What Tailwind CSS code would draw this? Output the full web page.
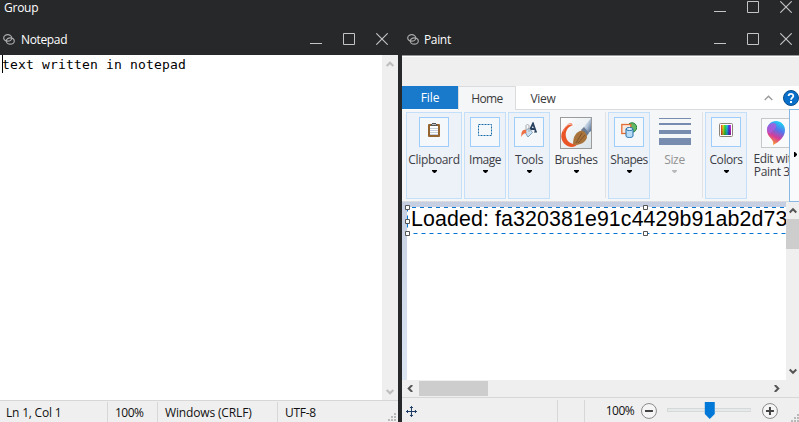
<!DOCTYPE html>
<html lang="en">
<head>
<meta charset="utf-8">
<title>Group</title>
<script src="https://cdn.jsdelivr.net/npm/@tailwindcss/browser@4"></script>
</head>
<body class="w-[799px] h-[422px] overflow-hidden bg-[#27282a] font-['Open_Sans','Noto_Sans',sans-serif] text-[12px] leading-4 text-[#111]">
<svg class="hidden">
  <symbol id="win" viewBox="0 0 78 12"><g fill="none" stroke="#c4c4c4"><path d="M0 10.5h12M33.5.5h11v11h-11z"/><path d="M66.300.3l11.400 11.400M77.700.3l-11.400 11.400" stroke-width="1.100"/></g></symbol>
  <symbol id="link" viewBox="0 0 12 11"><g fill="none" stroke="#aaa" stroke-width="1.200"><ellipse cx="4.700" cy="3.900" rx="4" ry="3.200"/><ellipse cx="7.300" cy="7" rx="4" ry="3.200"/></g></symbol>
  <symbol id="drop" viewBox="0 0 5 3"><path d="M0 0h5v1L3 3H2L0 1z"/></symbol>
  <symbol id="grip" viewBox="0 0 8 8"><path fill="#b9b9b9" d="M6 0h2v2H6zM3 3h2v2H3zM6 3h2v2H6zM0 6h2v2H0zM3 6h2v2H3zM6 6h2v2H6z"/></symbol>
</svg>

<header class="flex h-[23px] items-start justify-between pl-1 pr-[7px] text-white">
  <span class="tracking-[-0.25px]">Group</span>
  <svg class="mt-px h-3 w-[78px]"><use href="#win"/></svg>
</header>

<div class="grid h-[399px] grid-cols-[398px_397px] gap-1">
  <section class="flex min-w-0 flex-col">
    <div class="flex h-8 items-center pl-[3px] pr-[10px] text-white">
      <svg class="mr-[6px] h-[11px] w-3"><use href="#link"/></svg>
      <span class="mt-[2px] grow tracking-[-0.35px]">Notepad</span>
      <svg class="h-3 w-[78px]"><use href="#win"/></svg>
    </div>
    <div class="flex h-[345px] bg-white">
      <div class="flex grow items-start pl-[2px]">
        <div class="h-[18px] border-l border-black font-['DejaVu_Sans_Mono',monospace] text-[13px] leading-[19px] tracking-[0.170px] text-black"><span class="-ml-px">text written in notepad</span></div>
      </div>
      <div class="flex w-4 flex-col items-center justify-between bg-[#efefef] pb-[5px] pt-[6px]">
        <svg class="h-[7px] w-2" viewBox="0 0 8 7"><path d="M.7 5L4 1.700 7.300 5" fill="none" stroke="#bdbdbd" stroke-width="2"/></svg>
        <svg class="h-[7px] w-2" viewBox="0 0 8 7"><path d="M.7 2L4 5.300 7.300 2" fill="none" stroke="#bdbdbd" stroke-width="2"/></svg>
      </div>
    </div>
    <footer class="flex h-[22px] border-t border-[#d7d7d7] bg-[#efefef] pt-px text-[12px] leading-[22px]">
      <div class="w-[108px] border-r border-[#d7d7d7] pl-[6px] tracking-[-0.2px]">Ln 1, Col 1</div>
      <div class="w-[50px] border-r border-[#d7d7d7] pl-[7px] tracking-[-0.5px]">100%</div>
      <div class="w-[120px] border-r border-[#d7d7d7] pl-[7px] tracking-[-0.15px]">Windows (CRLF)</div>
      <div class="grow pl-[7px] tracking-[-0.3px]">UTF-8</div>
      <svg class="mr-[2px] mt-[11px] h-2 w-2"><use href="#grip"/></svg>
    </footer>
  </section>

  <section class="flex min-w-0 flex-col">
    <div class="flex h-8 items-center pl-[5px] pr-[7px] text-white">
      <svg class="mr-[5px] h-[11px] w-3"><use href="#link"/></svg>
      <span class="mt-[2px] grow tracking-[-0.35px]">Paint</span>
      <svg class="h-3 w-[78px]"><use href="#win"/></svg>
    </div>
    <div class="h-[31px] border-t border-[#999] bg-[#efefef]"><div class="h-px bg-white"></div></div>
    <nav class="flex h-6 bg-white text-center leading-6 text-[#3a3a3a]">
      <div class="h-[23px] w-14 bg-[#1979ca] tracking-[-0.1px] text-white">File</div>
      <div class="h-6 w-[58px] border-x border-t border-[#dadbdc] bg-[#f5f6f7] leading-[23px] tracking-[-0.6px]">Home</div>
      <div class="w-[54px] border-b border-[#dadbdc] leading-[25px] tracking-[-0.3px]">View</div>
      <div class="flex grow items-center justify-end gap-[10px] border-b border-[#dadbdc]">
        <svg class="h-[6px] w-[9px]" viewBox="0 0 9 6"><path d="M.7 5l3.800-3.800L8.300 5" fill="none" stroke="#999" stroke-width="1.300"/></svg>
        <svg class="h-4 w-4" viewBox="0 0 16 16"><circle cx="8" cy="8" r="7.500" fill="#0870cb" stroke="#0b4d8b"/><path d="M5.600 6C5.700 3.200 10.300 3.100 10.300 6c0 1.700-2.200 1.700-2.200 3.700" fill="none" stroke="white" stroke-width="1.800"/><path fill="white" d="M7 11h2v2H7z"/></svg>
      </div>
    </nav>
    <div class="flex h-[92px] border-b border-[#dadbdc] bg-[#f5f6f7] text-center text-[#3c3c46]">
      <div class="flex w-[387px] overflow-hidden pl-1 pt-[2px] tracking-[-0.35px]">
        <div class="mr-[2px] flex h-[87px] w-14 shrink-0 flex-col items-center border border-[#c3dffa] bg-[#ecf2f7] pt-1">
          <div class="grid h-[30px] w-[30px] shrink-0 place-items-center border border-[#9fcdf9] bg-[#f4f8fb]"><svg class="-mt-[5px] h-[14px] w-3" viewBox="0 0 12 14"><rect y="1" width="12" height="13" rx="1" fill="#95642f"/><path fill="#fff" d="M2 3h8v9H2z"/><path d="M2 5.500h8M2 7.500h8M2 9.500h8M2 11.500h8" stroke="#c4ced8"/><path fill="#555" d="M4 0h4v1h1v2H3V1h1z"/><path fill="#bbb" d="M4 1h4v1H4z"/></svg></div>
          <span class="mt-[5px]">Clipboard</span><svg class="mt-[2px] h-[3px] w-[5px]"><use href="#drop"/></svg>
        </div>
        <div class="mr-[2px] flex h-[87px] w-[42px] shrink-0 flex-col items-center border border-[#c3dffa] bg-[#ecf2f7] pt-1">
          <div class="grid h-[30px] w-[30px] shrink-0 place-items-center border border-[#9fcdf9] bg-[#f4f8fb]"><svg class="-mt-[5px] h-3 w-[14px]" viewBox="0 0 14 12"><rect x=".5" y=".5" width="13" height="11" fill="none" stroke="#176ba9" stroke-dasharray="2 1"/></svg></div>
          <span class="mt-[5px] tracking-[-0.5px]">Image</span><svg class="mt-[2px] h-[3px] w-[5px]"><use href="#drop"/></svg>
        </div>
        <div class="flex h-[87px] w-[42px] shrink-0 flex-col items-center border border-[#c3dffa] bg-[#ecf2f7] pt-1">
          <div class="grid h-[30px] w-[30px] shrink-0 place-items-center border border-[#9fcdf9] bg-[#f4f8fb]"><svg class="-mt-[5px] h-4 w-4" viewBox="0 0 16 16"><path d="M8 10L12 1.500l3 8.500M9.500 7h4" fill="none" stroke="#29415f" stroke-width="1.800"/><path d="M7 10h3m3 0h3" stroke="#29415f"/><path d="M3.500 9.500L8 6l3.500 4.500L7 15z" fill="#c9e1f2" stroke="#819eb8"/><path d="M5 9V4c0-2 3-2 3 0v6" fill="none" stroke="#aaa"/><path d="M5 8C2 7-.5 10 .5 15c1-3 3-4 5-4z" fill="#ed7047"/></svg></div>
          <span class="mt-[5px]">Tools</span><svg class="mt-[2px] h-[3px] w-[5px]"><use href="#drop"/></svg>
        </div>
        <div class="flex h-[86px] w-[56px] shrink-0 flex-col items-center border-r border-[#e0e2e4] pt-[5px] pr-[3px]">
          <svg class="h-8 w-8 shrink-0" viewBox="0 0 32 32"><defs><linearGradient id="paper" x2="1" y2="1"><stop stop-color="#fff"/><stop offset="1" stop-color="#d9e3e8"/></linearGradient><linearGradient id="handle" x2="1" y2="1"><stop stop-color="#fff"/><stop offset=".5" stop-color="#b8c9dc"/><stop offset="1" stop-color="#405b82"/></linearGradient></defs><rect x=".5" y=".5" width="31" height="31" fill="url(#paper)" stroke="#9b9b9b"/><path d="M13 8C9 6 3 11 1.500 17 0 24 6 30 12 30c2 0 4-1 6-3-6 1-11-2-12-7C5 15 7 10 13 8z" fill="#ea5527"/><path d="M12 7C9 5 5 10 3 15" fill="none" stroke="#f38463"/><path d="M23 11l8-10v13l-4 3z" fill="url(#handle)"/><path d="M21 13l3-3 5 6-3 4z" fill="#6b7b91"/><path d="M13 27.500c0-8 3-13 9-14 3 1 5 4 5 7-2 6-8 8-14 7z" fill="#a8743c"/><path d="M16 26l6-10M18 26l7-8" stroke="#80522a"/></svg>
          <span class="mt-[3px]">Brushes</span><svg class="mt-[2px] h-[3px] w-[5px]"><use href="#drop"/></svg>
        </div>
        <div class="ml-[2px] flex h-[87px] w-[42px] shrink-0 flex-col items-center border border-[#c3dffa] bg-[#ecf2f7] pt-1">
          <div class="grid h-[30px] w-[30px] shrink-0 place-items-center border border-[#9fcdf9] bg-[#f4f8fb]"><svg class="-mt-[5px] h-4 w-4" viewBox="0 0 16 16"><circle cx="11" cy="5.500" r="4.700" fill="#64b765" stroke="#24843b"/><rect x=".8" y="2.500" width="9" height="9" fill="#fae8df" stroke="#e36c36" stroke-width="1.300"/><path d="M5 7v7c0 2 7 2 7 0V7" fill="#b8dcf5" stroke="#226fad"/><ellipse cx="8.500" cy="7" rx="3.500" ry="1.500" fill="#e5f4ff" stroke="#226fad"/></svg></div>
          <span class="mt-[5px] tracking-[-0.5px]">Shapes</span><svg class="mt-[2px] h-[3px] w-[5px]"><use href="#drop"/></svg>
        </div>
        <div class="flex h-[86px] w-[53px] shrink-0 flex-col items-center border-r border-[#e0e2e4] pr-[3px] pt-[6px] text-[#929292]">
          <svg class="h-[27px] w-8 shrink-0" viewBox="0 0 32 27"><path fill="#788caf" d="M0 0h32v1H0zM0 5h32v2H0zM0 12h32v4H0zM0 20h32v7H0z"/></svg>
          <span class="mt-[7px]">Size</span><svg class="mt-[2px] h-[3px] w-[5px] fill-[#b9b9b9]"><use href="#drop"/></svg>
        </div>
        <div class="ml-[2px] flex h-[87px] w-[42px] shrink-0 flex-col items-center border border-[#c3dffa] bg-[#ecf2f7] pt-1">
          <div class="grid h-[30px] w-[30px] shrink-0 place-items-center border border-[#9fcdf9] bg-[#f4f8fb]"><svg class="-mt-[5px] h-[14px] w-[14px]" viewBox="0 0 14 14"><defs><linearGradient id="rain"><stop stop-color="#f22a20"/><stop offset=".2" stop-color="#e9e329"/><stop offset=".4" stop-color="#24dc39"/><stop offset=".6" stop-color="#25c9ea"/><stop offset=".8" stop-color="#4433e2"/><stop offset="1" stop-color="#e629d5"/></linearGradient><linearGradient id="dark" x2="0" y2="1"><stop stop-opacity="0"/><stop offset="1" stop-opacity=".3"/></linearGradient></defs><rect x=".5" y=".5" width="13" height="13" rx="1" fill="#fff" stroke="#8b8378"/><path fill="url(#rain)" d="M2 2h10v10H2z"/><path fill="url(#dark)" d="M2 2h10v10H2z"/></svg></div>
          <span class="mt-[5px] tracking-[-0.450px]">Colors</span><svg class="mt-[2px] h-[3px] w-[5px]"><use href="#drop"/></svg>
        </div>
        <div class="ml-[5px] flex w-[48px] shrink-0 flex-col items-center pt-[6px]">
          <svg class="h-[30px] w-[30px] shrink-0" viewBox="0 0 30 30"><defs><linearGradient id="pin" x1=".7" x2=".3" y2="1"><stop stop-color="#17d9f5"/><stop offset=".35" stop-color="#5475ed"/><stop offset=".65" stop-color="#d63c9a"/><stop offset="1" stop-color="#ffa51c"/></linearGradient></defs><rect x=".5" y=".5" width="29" height="29" fill="#f9fafb" stroke="#c8c8c8"/><path d="M12 27c2-6-6-7-6-15 0-5 4-9 9-9s9 4 9 9c0 7-6 12-12 15z" fill="url(#pin)"/><path d="M6 12c0-4 3-7 7-7 3 1 3 4 1 6s-4 2-4 5c-2-1-4-2-4-4z" fill="#b259da" opacity=".75"/></svg>
          <span class="mt-[4px] w-[60px] whitespace-nowrap leading-[13px]">Edit with<br>Paint 3D</span>
        </div>
      </div>
      <div class="-mt-px flex h-[93px] w-[10px] shrink-0 items-center border border-r-0 border-[#89b8e4] bg-[#f8fafc] pl-1"><svg class="-mt-[2px] h-[5px] w-[3px]" viewBox="0 0 3 5"><path d="M0 0h1l2 2v1L1 5H0z"/></svg></div>
    </div>
    <div class="flex h-[178px]">
      <div class="relative h-[178px] w-[384px] overflow-hidden bg-linear-to-b from-[#c5cfe1] to-[#dce6f3] pl-[5px] pt-[5px]">
        <div class="h-[173px] w-[379px] overflow-hidden whitespace-nowrap bg-white pl-1 font-['Liberation_Sans',sans-serif] text-[21.330px] leading-6 tracking-[0.120px] text-black">Loaded: fa320381e91c4429b91ab2d73</div>
        <svg class="absolute left-[3px] top-[3px] h-[31px] w-[381px]" viewBox="0 0 381 31"><path d="M2.500 2.500H381M2.500 2.500V28.500H381" fill="none" stroke="#fff"/><path d="M7 2.500H381M2.500 2.500V28.500H381" fill="none" stroke="#0875d1" stroke-dasharray="4 4"/><g fill="#fff" stroke="#555"><path d="M.5.500h4v4h-4zM.5 14.500h4v4h-4zM.5 26.500h4v4h-4zM238.500.500h4v4h-4zM238.500 26.500h4v4h-4z"/></g></svg>
      </div>
      <div class="flex w-[13px] flex-col items-center bg-[#efefef] pt-[5px]">
        <svg class="h-[7px] w-2" viewBox="0 0 8 7"><path d="M.7 5.500L4 2.200l3.300 3.300" fill="none" stroke="#555" stroke-width="2"/></svg>
        <div class="mt-[5px] h-[30px] w-full bg-[#cdcdcd]"></div>
        <div class="grow"></div>
        <svg class="mb-[5px] h-[7px] w-2" viewBox="0 0 8 7"><path d="M.7 1.500L4 4.800l3.300-3.300" fill="none" stroke="#555" stroke-width="2"/></svg>
      </div>
    </div>
    <div class="flex h-[17px] items-center bg-[#efefef] pl-[5px] pr-[19px]">
      <svg class="mr-[6px] h-[7px] w-[6px]" viewBox="0 0 6 7"><path d="M5.200 0L1.700 3.500 5.200 7" fill="none" stroke="#555" stroke-width="2"/></svg>
      <div class="h-[15px] w-[69px] bg-[#cdcdcd]"></div><div class="grow"></div>
      <svg class="h-[7px] w-[6px]" viewBox="0 0 6 7"><path d="M.8 0l3.500 3.500L.8 7" fill="none" stroke="#555" stroke-width="2"/></svg>
    </div>
    <footer class="flex h-[25px] items-center border-t border-[#d7d7d7] bg-[#efefef] pl-1">
      <svg class="mt-[2px] h-[11px] w-[11px]" viewBox="0 0 11 11"><path d="M0 5.500h11M5.500 0v11M4 1.500h3M4 9.500h3M1.500 4v3M9.500 4v3" stroke="#1d3c65" fill="none"/></svg>
      <div class="ml-[140px] mt-[2px] h-[22px] w-7 border-x border-[#d7d7d7]"></div>
      <span class="ml-[21px] mt-[2px] w-[35px] tracking-[-0.55px]">100%</span>
      <svg class="mt-[2px] h-4 w-4" viewBox="0 0 16 16"><circle cx="8" cy="8" r="7.500" fill="#f5f5f5" stroke="#898989"/><path d="M4 8h8" stroke="#444" stroke-width="2"/></svg>
      <svg class="ml-[10px] mt-px h-[17px] w-[85px]" viewBox="0 0 85 17"><rect x=".5" y="6.500" width="84" height="3" fill="#e7eaea" stroke="#d5dad8"/><path d="M38 0h10v12l-5 5-5-5z" fill="#0078d7"/></svg>
      <svg class="ml-[11px] mt-[2px] h-4 w-4" viewBox="0 0 16 16"><circle cx="8" cy="8" r="7.500" fill="#f5f5f5" stroke="#898989"/><path d="M4 8h8M8 4v8" stroke="#444" stroke-width="2"/></svg>
      <svg class="ml-[13px] mt-[15px] h-2 w-2 shrink-0"><use href="#grip"/></svg>
    </footer>
  </section>
</div>
</body>
</html>
